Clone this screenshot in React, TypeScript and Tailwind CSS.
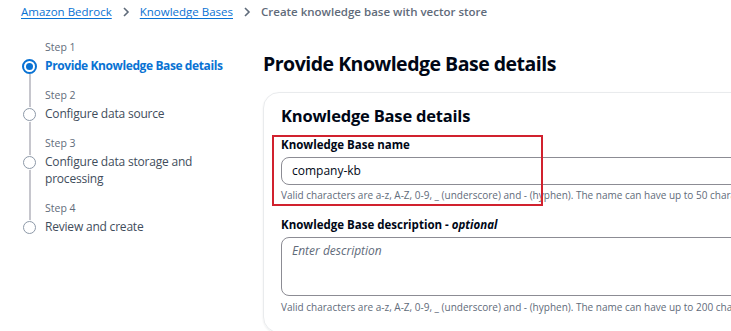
import React from "react";

const steps = [
  { step: "Step 1", title: ["Provide Knowledge Base details"], active: true },
  { step: "Step 2", title: ["Configure data source"] },
  { step: "Step 3", title: ["Configure data storage and", "processing"] },
  { step: "Step 4", title: ["Review and create"] },
];

const Chevron = () => (
  <svg width="10" height="12" viewBox="0 0 10 12" className="mx-[9px]">
    <path d="M3 2l4 4-4 4" fill="none" stroke="#5f6b7a" strokeWidth="1.6" />
  </svg>
);

function StepMarker({ active }: { active?: boolean }) {
  return active ? (
    <div className="flex h-[15px] w-[15px] items-center justify-center rounded-full border-[2px] border-[#0972d3]">
      <div className="h-[7px] w-[7px] rounded-full bg-[#0972d3]" />
    </div>
  ) : (
    <div className="h-[13px] w-[13px] rounded-full border-[1.5px] border-[#8d99a8]" />
  );
}

export default function App() {
  return (
    <div
      className="h-[331px] w-[731px] overflow-hidden bg-white text-[#000716]"
      style={{ fontFamily: '"Open Sans", "Noto Sans", sans-serif' }}
    >
      {/* breadcrumb */}
      <div className="flex h-[24px] items-center pl-[21px] text-[11.5px]">
        <span className="text-[#0972d3] underline decoration-[#0972d3] underline-offset-2">Amazon Bedrock</span>
        <Chevron />
        <span className="text-[#0972d3] underline decoration-[#0972d3] underline-offset-2">Knowledge Bases</span>
        <Chevron />
        <span className="font-semibold text-[#5f6b7a]">Create knowledge base with vector store</span>
      </div>

      <div className="flex">
        {/* steps */}
        <div className="relative w-[263px] shrink-0 pl-[22px] pt-[15px]">
          <div className="absolute left-[29px] top-[50px] h-[160px] w-[1.5px] bg-[#c6c6cd]" />
          {steps.map((s, i) => (
            <div key={s.step} className={i === 0 ? "" : "mt-[13px]"}>
              <div className="pl-[23px] text-[10.5px] leading-[17px] text-[#5f6b7a]">{s.step}</div>
              <div className="mt-[1px] flex items-start">
                <div className="relative z-10 mt-[2px] flex h-[15px] w-[15px] items-center justify-center rounded-full bg-white">
                  <StepMarker active={s.active} />
                </div>
                <div
                  className={
                    "pl-[8px] text-[12px] leading-[17px] " +
                    (s.active ? "font-bold tracking-[-0.4px] text-[#0972d3]" : "tracking-[-0.2px] text-[#414d5c]")
                  }
                >
                  {s.title.map((t) => (
                    <div key={t}>{t}</div>
                  ))}
                </div>
              </div>
            </div>
          ))}
        </div>

        {/* main */}
        <div className="shrink-0">
          <h1 className="pt-[27px] text-[19.5px] font-bold leading-[26px] tracking-[-0.5px] text-[#000716]">
            Provide Knowledge Base details
          </h1>
          <div className="mt-[15px] w-[520px] rounded-[16px] border border-[#e9ebed] px-[17px] pb-[17px] pt-[12px] shadow-[0_1px_2px_rgba(0,7,22,0.08)]">
            <h2 className="text-[16.5px] font-bold leading-[22px] tracking-[-0.2px]">Knowledge Base details</h2>

            <div className="relative mt-[10px]">
              <div className="pointer-events-none absolute -left-[9px] -top-[2px] h-[71px] w-[271px] border-[2px] border-[#d1212e]" />
              <div className="text-[11.5px] font-bold leading-[15px]">Knowledge Base name</div>
              <div className="mt-[5px] flex h-[28px] w-[520px] items-center rounded-[8px] border border-[#8c8c94] px-[10px] text-[12px]">
                company-kb
              </div>
              <div className="mt-[3px] whitespace-nowrap text-[10px] leading-[15px] text-[#5f6b7a]">
                Valid characters are a-z, A-Z, 0-9, _ (underscore) and - (hyphen). The name can have up to 50 characters.
              </div>
            </div>

            <div className="mt-[14px] text-[11.5px] font-bold leading-[15px]">
              Knowledge Base description - <i>optional</i>
            </div>
            <div className="mt-[5px] h-[59px] w-[520px] rounded-[8px] border border-[#8c8c94] px-[10px] pt-[4px] text-[12px] italic text-[#5f6b7a]">
              Enter description
            </div>
            <div className="mt-[4px] whitespace-nowrap text-[10px] leading-[15px] text-[#5f6b7a]">
              Valid characters are a-z, A-Z, 0-9, _ (underscore) and - (hyphen). The name can have up to 200 characters.
            </div>
          </div>
        </div>
      </div>
    </div>
  );
}
